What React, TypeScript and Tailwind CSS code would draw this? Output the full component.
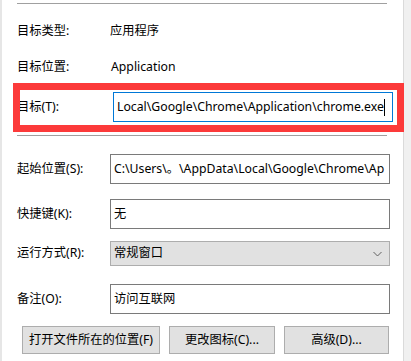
import { ReactNode } from "react";

const font = {
  fontFamily: '"Noto Sans", "Noto Sans CJK SC", sans-serif',
};

const Row = ({
  label,
  children,
  className = "",
}: {
  label: string;
  children: ReactNode;
  className?: string;
}) => (
  <div className={`flex items-center ${className}`}>
    <div className="w-[93px] shrink-0">{label}</div>
    {children}
  </div>
);

const TextBox = ({
  value,
  focused,
  className = "",
}: {
  value: string;
  focused?: boolean;
  className?: string;
}) => (
  <div
    className={`w-[280px] h-[30px] flex items-center px-[3px] overflow-hidden whitespace-nowrap bg-white border ${
      focused ? "border-[#0078d7]" : "border-[#7a7a7a]"
    } ${className}`}
  >
    <span>{value}</span>
    {focused && <span className="w-px h-[17px] bg-black shrink-0" />}
  </div>
);

const Button = ({ text, className = "" }: { text: string; className?: string }) => (
  <div
    className={`h-[28px] flex items-center justify-center bg-[#e1e1e1] border border-[#adadad] ${className}`}
  >
    {text}
  </div>
);

export default function App() {
  return (
    <div
      className="relative flex w-[411px] h-[361px] bg-white text-[12.25px] leading-none text-black overflow-hidden"
      style={font}
    >
      <div className="w-[2px] bg-[#e6e6e6]" />

      <div className="w-[401px] pl-[15px] pt-[3px] flex flex-col">
        <div className="w-[370px] h-px bg-[#a0a0a0]" />

        <Row label="目标类型:" className="h-[20px] mt-[17px]">
          <span>应用程序</span>
        </Row>
        <Row label="目标位置:" className="h-[20px] mt-[16px]">
          <span className="ml-px">Application</span>
        </Row>

        <Row label="目标(T):" className="mt-[15px] pl-[3px] -ml-[3px]">
          <TextBox
            value="Local\Google\Chrome\Application\chrome.exe"
            focused
            className="ml-[3px] -mr-[3px]"
          />
        </Row>

        <div className="w-[370px] h-px bg-[#a0a0a0] mt-[13px]" />

        <Row label="起始位置(S):" className="mt-[18px]">
          <TextBox value="C:\Users\。\AppData\Local\Google\Chrome\Ap" />
        </Row>

        <Row label="快捷键(K):" className="mt-[15px]">
          <TextBox value="无" />
        </Row>

        <Row label="运行方式(R):" className="mt-[12px]">
          <div className="w-[280px] h-[25px] flex items-center justify-between pl-[3px] pr-[7px] bg-[#e1e1e1] border border-[#adadad]">
            <span>常规窗口</span>
            <svg width="9" height="6" viewBox="0 0 9 6" fill="none">
              <path d="M0.5 1 L4.5 5 L8.5 1" stroke="#606060" strokeWidth="1" />
            </svg>
          </div>
        </Row>

        <Row label="备注(O):" className="mt-[18px]">
          <TextBox value="访问互联网" />
        </Row>

        <div className="flex gap-[9px] mt-[12px] ml-[5px]">
          <Button text="打开文件所在的位置(F)" className="w-[138px]" />
          <Button text="更改图标(C)..." className="w-[106px]" />
          <Button text="高级(D)..." className="w-[105px]" />
        </div>
      </div>

      <div className="w-px bg-[#dadada]" />
      <div className="flex-1 bg-[#f0f0f0]" />

      {/* red annotation box */}
      <div className="absolute left-[13px] top-[83px] w-[391px] h-[49px] border-[7px] border-[#fc3a3a] pointer-events-none" />
    </div>
  );
}
